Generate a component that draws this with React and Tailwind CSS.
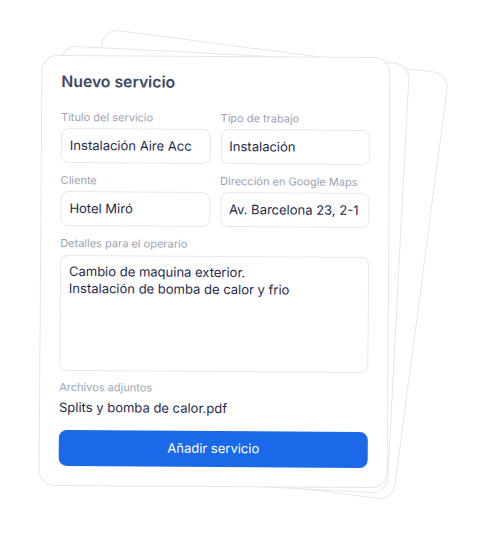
import React from 'react';

const Field = ({ label, value }) => (
    <div className="flex flex-col">
        <span className="text-[11px] leading-[16px] text-[#9aa3b5]">{label}</span>
        <div className="mt-[3px] h-[35px] flex items-center px-[8px] rounded-lg border border-[#e6e8ef] bg-white text-[13px] text-[#1e2a4d] whitespace-nowrap overflow-hidden">
            {value}
        </div>
    </div>
);

const ServiceForm = () => {
    return (
        <div className="relative w-[349px] h-[431px] bg-white border border-[#e4e6ec] rounded-[16px] px-[19px] pt-[13px] pb-[19px] rotate-[0.4deg] flex flex-col">
            <h2 className="text-[15.75px] leading-[26px] font-semibold text-[#3b4866]">Nuevo servicio</h2>

            <div className="mt-[14px] grid grid-cols-2 gap-x-[10px] gap-y-[9px]">
                <Field label="Título del servicio" value="Instalación Aire Acc" />
                <Field label="Tipo de trabajo" value="Instalación" />
                <Field label="Cliente" value="Hotel Miró" />
                <Field label="Dirección en Google Maps" value="Av. Barcelona 23, 2-1" />
            </div>

            {/* detalles */}
            <div className="mt-[9px] flex flex-col">
                <span className="text-[11px] leading-[16px] text-[#9aa3b5]">Detalles para el operario</span>
                <div className="mt-[4px] h-[116px] rounded-lg border border-[#e6e8ef] px-[8px] pt-[7px] text-[13px] leading-[17px] text-[#1e2a4d]">
                    <p>Cambio de maquina exterior.</p>
                    <p>Instalación de bomba de calor y frio</p>
                </div>
            </div>

            <div className="mt-[8px] flex flex-col">
                <span className="text-[11px] leading-[16px] text-[#9aa3b5]">Archivos adjuntos</span>
                <span className="mt-[2px] text-[13px] leading-[20px] text-[#1e2a4d]">Splits y bomba de calor.pdf</span>
            </div>

            <button className="mt-[13px] h-[38px] w-full rounded-lg bg-[#1a69e8] text-white text-[13px] flex items-center justify-center">
                Añadir servicio
            </button>
        </div>
    );
};

export default function App() {
    return (
        <div className="w-[487px] h-[533px] bg-white overflow-hidden pl-[40px] pt-[56px]" style={{ fontFamily: 'Inter, "Noto Sans", sans-serif' }}>
            <div className="relative w-[349px]">
                {/* stacked sheets behind the form */}
                <div className="absolute inset-0 h-[431px] bg-white border border-[#e4e6ec] rounded-[16px] translate-x-[34px] -translate-y-[7px] rotate-[7.5deg]" />
                <div className="absolute inset-0 h-[431px] bg-white border border-[#e4e6ec] rounded-[16px] translate-x-[10px] -translate-y-[2px] rotate-[3deg]" />
                <ServiceForm />
            </div>
        </div>
    );
}
